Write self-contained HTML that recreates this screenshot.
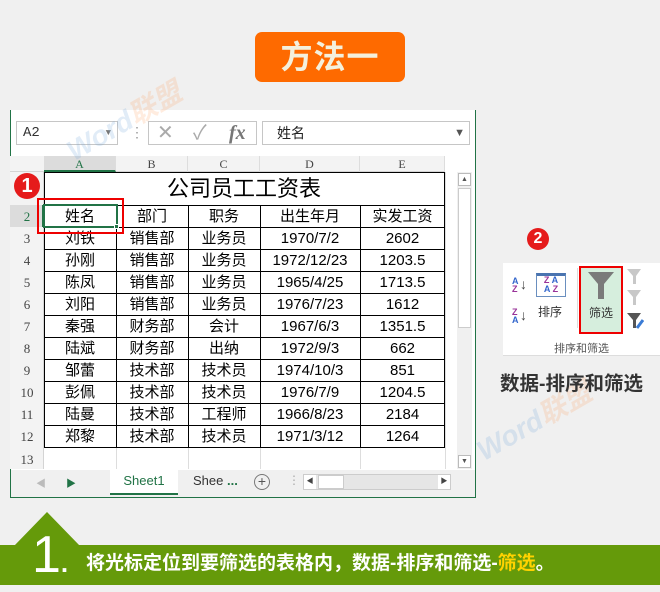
<!DOCTYPE html>
<html><head><meta charset="utf-8"><style>
*{margin:0;padding:0;box-sizing:border-box}
body{width:660px;height:585px;background:#f0f0f0;position:relative;overflow:hidden;font-family:"Liberation Sans","Noto Sans CJK SC",sans-serif}
.a{position:absolute}
.c{position:absolute;text-align:center;font-size:15px;color:#000;line-height:23px}
.hl{position:absolute;height:1px;background:#000}
.vl{position:absolute;width:1px;background:#000}
.rh{position:absolute;left:10px;width:34px;text-align:center;font-size:13px;color:#444;font-family:"Liberation Serif","DejaVu Serif",serif}
.ch{position:absolute;top:156px;height:16px;text-align:center;font-size:12px;color:#444;font-family:"Liberation Serif",serif;line-height:16px;border-right:1px solid #ddd}
</style></head><body>
<div class="a" style="left:255px;top:32px;width:150px;height:50px;background:#fe6a00;border-radius:7px;color:#f4f0dc;font-size:32px;font-weight:bold;text-align:center;line-height:50px;letter-spacing:1px">方法一</div>

<div class="a" style="left:10px;top:110px;width:466px;height:388px;background:#fff;border:1px solid #217346;border-top:none"></div>
<div class="a" style="left:16px;top:121px;width:102px;height:24px;border:1px solid #c6c6c6;font-size:14px;line-height:22px;padding-left:6px;color:#333;font-family:'Liberation Mono',monospace;background:#fff">A2<span style="position:absolute;right:6px;top:0;font-size:9px;color:#777">▼</span></div>
<div class="a" style="left:130px;top:124px;color:#999;font-size:14px">⋮</div>
<div class="a" style="left:148px;top:121px;width:109px;height:24px;border:1px solid #c6c6c6;font-size:20px;line-height:22px;color:#aaa"><span style="position:absolute;left:8px">✕</span><span style="position:absolute;left:44px">✓</span><span style="position:absolute;left:80px;font-style:italic;font-family:'Liberation Serif',serif;color:#777;font-weight:bold">fx</span></div>
<div class="a" style="left:262px;top:121px;width:208px;height:24px;border:1px solid #c6c6c6;font-size:14px;line-height:22px;padding-left:14px;color:#222">姓名<span style="position:absolute;right:4px;top:0;font-size:11px;color:#555">▼</span></div>

<div class="a" style="left:10px;top:156px;width:435px;height:16px;background:#f3f3f3;border-bottom:1px solid #d4d4d4"></div>
<div class="ch" style="left:44px;width:72px;background:#dcdcdc;border-bottom:2px solid #217346;color:#217346">A</div>
<div class="ch" style="left:116px;width:72px">B</div>
<div class="ch" style="left:188px;width:72px">C</div>
<div class="ch" style="left:260px;width:100px">D</div>
<div class="ch" style="left:360px;width:85px">E</div>
<div class="a" style="left:10px;top:172px;width:34px;height:297px;background:#f3f3f3;border-right:1px solid #d4d4d4"></div>
<div class="a" style="left:10px;top:205px;width:34px;height:22px;background:#dcdcdc;border-right:2px solid #217346"></div>
<div class="rh" style="top:180px">1</div>
<div class="rh" style="top:209px;color:#217346">2</div>
<div class="rh" style="top:231px">3</div><div class="rh" style="top:253px">4</div><div class="rh" style="top:275px">5</div><div class="rh" style="top:297px">6</div><div class="rh" style="top:319px">7</div><div class="rh" style="top:341px">8</div><div class="rh" style="top:363px">9</div><div class="rh" style="top:385px">10</div><div class="rh" style="top:407px">11</div><div class="rh" style="top:429px">12</div><div class="rh" style="top:452px">13</div>
<div class="a" style="left:116px;top:447px;width:1px;height:22px;background:#ddd"></div>
<div class="a" style="left:188px;top:447px;width:1px;height:22px;background:#ddd"></div>
<div class="a" style="left:260px;top:447px;width:1px;height:22px;background:#ddd"></div>
<div class="a" style="left:360px;top:447px;width:1px;height:22px;background:#ddd"></div>
<div class="a" style="left:445px;top:172px;width:1px;height:297px;background:#ddd"></div>
<div class="hl" style="left:44px;top:172px;width:401px"></div>
<div class="hl" style="left:44px;top:205px;width:401px"></div>
<div class="hl" style="left:44px;top:227px;width:401px"></div>
<div class="hl" style="left:44px;top:249px;width:401px"></div>
<div class="hl" style="left:44px;top:271px;width:401px"></div>
<div class="hl" style="left:44px;top:293px;width:401px"></div>
<div class="hl" style="left:44px;top:315px;width:401px"></div>
<div class="hl" style="left:44px;top:337px;width:401px"></div>
<div class="hl" style="left:44px;top:359px;width:401px"></div>
<div class="hl" style="left:44px;top:381px;width:401px"></div>
<div class="hl" style="left:44px;top:403px;width:401px"></div>
<div class="hl" style="left:44px;top:425px;width:401px"></div>
<div class="hl" style="left:44px;top:447px;width:401px"></div>
<div class="vl" style="left:44px;top:172px;height:275px"></div>
<div class="vl" style="left:116px;top:205px;height:242px"></div>
<div class="vl" style="left:188px;top:205px;height:242px"></div>
<div class="vl" style="left:260px;top:205px;height:242px"></div>
<div class="vl" style="left:360px;top:205px;height:242px"></div>
<div class="vl" style="left:444px;top:172px;height:275px"></div>
<div class="c" style="left:44px;top:174px;width:400px;font-size:22px;line-height:30px">公司员工工资表</div>
<div class="c" style="left:44px;top:205px;width:72px">姓名</div><div class="c" style="left:116px;top:205px;width:72px">部门</div><div class="c" style="left:188px;top:205px;width:72px">职务</div><div class="c" style="left:260px;top:205px;width:100px">出生年月</div><div class="c" style="left:360px;top:205px;width:85px">实发工资</div>
<div class="c" style="left:44px;top:227px;width:72px">刘铁</div><div class="c" style="left:116px;top:227px;width:72px">销售部</div><div class="c" style="left:188px;top:227px;width:72px">业务员</div><div class="c" style="left:260px;top:227px;width:100px">1970/7/2</div><div class="c" style="left:360px;top:227px;width:85px">2602</div>
<div class="c" style="left:44px;top:249px;width:72px">孙刚</div><div class="c" style="left:116px;top:249px;width:72px">销售部</div><div class="c" style="left:188px;top:249px;width:72px">业务员</div><div class="c" style="left:260px;top:249px;width:100px">1972/12/23</div><div class="c" style="left:360px;top:249px;width:85px">1203.5</div>
<div class="c" style="left:44px;top:271px;width:72px">陈凤</div><div class="c" style="left:116px;top:271px;width:72px">销售部</div><div class="c" style="left:188px;top:271px;width:72px">业务员</div><div class="c" style="left:260px;top:271px;width:100px">1965/4/25</div><div class="c" style="left:360px;top:271px;width:85px">1713.5</div>
<div class="c" style="left:44px;top:293px;width:72px">刘阳</div><div class="c" style="left:116px;top:293px;width:72px">销售部</div><div class="c" style="left:188px;top:293px;width:72px">业务员</div><div class="c" style="left:260px;top:293px;width:100px">1976/7/23</div><div class="c" style="left:360px;top:293px;width:85px">1612</div>
<div class="c" style="left:44px;top:315px;width:72px">秦强</div><div class="c" style="left:116px;top:315px;width:72px">财务部</div><div class="c" style="left:188px;top:315px;width:72px">会计</div><div class="c" style="left:260px;top:315px;width:100px">1967/6/3</div><div class="c" style="left:360px;top:315px;width:85px">1351.5</div>
<div class="c" style="left:44px;top:337px;width:72px">陆斌</div><div class="c" style="left:116px;top:337px;width:72px">财务部</div><div class="c" style="left:188px;top:337px;width:72px">出纳</div><div class="c" style="left:260px;top:337px;width:100px">1972/9/3</div><div class="c" style="left:360px;top:337px;width:85px">662</div>
<div class="c" style="left:44px;top:359px;width:72px">邹蕾</div><div class="c" style="left:116px;top:359px;width:72px">技术部</div><div class="c" style="left:188px;top:359px;width:72px">技术员</div><div class="c" style="left:260px;top:359px;width:100px">1974/10/3</div><div class="c" style="left:360px;top:359px;width:85px">851</div>
<div class="c" style="left:44px;top:381px;width:72px">彭佩</div><div class="c" style="left:116px;top:381px;width:72px">技术部</div><div class="c" style="left:188px;top:381px;width:72px">技术员</div><div class="c" style="left:260px;top:381px;width:100px">1976/7/9</div><div class="c" style="left:360px;top:381px;width:85px">1204.5</div>
<div class="c" style="left:44px;top:403px;width:72px">陆曼</div><div class="c" style="left:116px;top:403px;width:72px">技术部</div><div class="c" style="left:188px;top:403px;width:72px">工程师</div><div class="c" style="left:260px;top:403px;width:100px">1966/8/23</div><div class="c" style="left:360px;top:403px;width:85px">2184</div>
<div class="c" style="left:44px;top:425px;width:72px">郑黎</div><div class="c" style="left:116px;top:425px;width:72px">技术部</div><div class="c" style="left:188px;top:425px;width:72px">技术员</div><div class="c" style="left:260px;top:425px;width:100px">1971/3/12</div><div class="c" style="left:360px;top:425px;width:85px">1264</div>
<div class="a" style="left:43px;top:204px;width:75px;height:24px;border:2px solid #217346"></div>
<div class="a" style="left:114px;top:224px;width:5px;height:5px;background:#217346;border:1px solid #fff"></div>
<div class="a" style="left:37px;top:198px;width:87px;height:36px;border:2px solid #e00"></div>
<div class="a" style="left:14px;top:173px;width:26px;height:26px;border-radius:50%;background:#e51b1b;color:#fff;font-weight:bold;font-size:20px;text-align:center;line-height:26px">1</div>
<div class="a" style="left:457px;top:172px;width:15px;height:297px;background:#f0f0f0"></div>
<div class="a" style="left:458px;top:173px;width:13px;height:13px;border:1px solid #bbb;background:#fff;font-size:7px;text-align:center;color:#555;line-height:11px">▲</div>
<div class="a" style="left:458px;top:188px;width:13px;height:140px;border:1px solid #ccc;background:#fff"></div>
<div class="a" style="left:458px;top:455px;width:13px;height:13px;border:1px solid #bbb;background:#fff;font-size:7px;text-align:center;color:#555;line-height:11px">▼</div>
<div class="a" style="left:11px;top:470px;width:464px;height:27px;background:#f0f0f0"></div>
<div class="a" style="left:36px;top:475px;font-size:10px;color:#bbb">◀</div>
<div class="a" style="left:66px;top:475px;font-size:10px;color:#217346">▶</div>
<div class="a" style="left:110px;top:469px;width:68px;height:26px;background:#fff;border-bottom:2px solid #217346;color:#217346;font-size:13px;text-align:center;line-height:24px">Sheet1</div>
<div class="a" style="left:193px;top:473px;font-size:13px;color:#333">Shee <b style="color:#217346">...</b></div>
<div class="a" style="left:254px;top:474px;width:16px;height:16px;border:1px solid #777;border-radius:50%;text-align:center;line-height:13px;font-size:14px;color:#555">+</div>
<div class="a" style="left:288px;top:473px;color:#aaa;font-size:12px">⋮</div>
<div class="a" style="left:303px;top:474px;width:148px;height:16px;background:#e6e6e6;border:1px solid #ccc"></div>
<div class="a" style="left:304px;top:475px;width:12px;height:14px;background:#fff;font-size:7px;line-height:14px;text-align:center;color:#444">◀</div>
<div class="a" style="left:318px;top:475px;width:26px;height:14px;background:#fff;border:1px solid #ccc"></div>
<div class="a" style="left:438px;top:475px;width:12px;height:14px;background:#fff;font-size:7px;line-height:14px;text-align:center;color:#444">▶</div>
<div class="a" style="left:60px;top:100px;transform:rotate(-30deg);font-size:28px;font-weight:bold;color:rgba(120,170,220,.22);font-style:italic">Word<span style="color:rgba(255,150,80,.18)">联盟</span></div>
<div class="a" style="left:470px;top:400px;transform:rotate(-30deg);font-size:28px;font-weight:bold;color:rgba(120,170,220,.22);font-style:italic">Word<span style="color:rgba(255,150,80,.18)">联盟</span></div>

<div class="a" style="left:527px;top:228px;width:22px;height:22px;border-radius:50%;background:#e51b1b;color:#fff;font-weight:bold;font-size:16px;text-align:center;line-height:22px">2</div>
<div class="a" style="left:503px;top:263px;width:157px;height:93px;background:#fff;border-bottom:1px solid #ddd"></div>
<div class="a" style="left:512px;top:277px;font-size:9px;line-height:8px;color:#555;font-weight:bold"><span style="color:#36c">A</span><br><span style="color:#939">Z</span></div>
<div class="a" style="left:520px;top:276px;font-size:14px;color:#444">↓</div>
<div class="a" style="left:512px;top:308px;font-size:9px;line-height:8px;color:#555;font-weight:bold"><span style="color:#939">Z</span><br><span style="color:#36c">A</span></div>
<div class="a" style="left:520px;top:307px;font-size:14px;color:#444">↓</div>
<div class="a" style="left:536px;top:273px;width:30px;height:24px;border:1px solid #6a8fbf;border-top:3px solid #4a74b0;font-size:9px;line-height:9px;font-weight:bold;text-align:center"><span style="color:#939">Z</span> <span style="color:#36c">A</span><br><span style="color:#36c">A</span> <span style="color:#939">Z</span></div>
<div class="a" style="left:538px;top:303px;font-size:12px;color:#333">排序</div>
<div class="a" style="left:577px;top:268px;width:1px;height:60px;background:#ddd"></div>
<div class="a" style="left:579px;top:266px;width:44px;height:68px;background:#d6eedd;border:2px solid #e00"></div>
<svg class="a" style="left:587px;top:271px" width="28" height="30"><path d="M1 1H27L17 13V28H11V13Z" fill="#7a7a7a"/></svg>
<div class="a" style="left:589px;top:304px;font-size:12px;color:#333">筛选</div>
<svg class="a" style="left:626px;top:268px" width="18" height="66"><path d="M1 1H15L10 8V16H7V8Z" fill="#c8c8c8"/><path d="M1 22H15L10 29V37H7V29Z" fill="#c8c8c8"/><path d="M1 45H15L10 52V60H7V52Z" fill="#555"/><path d="M11 60L17 52" stroke="#3a7bd5" stroke-width="3"/></svg>
<div class="a" style="left:503px;top:340px;width:157px;text-align:center;font-size:11px;color:#555">排序和筛选</div>
<div class="a" style="left:500px;top:367px;font-size:19.5px;font-weight:bold;color:#333">数据-排序和筛选</div>

<svg class="a" style="left:0;top:510px" width="90" height="40"><path d="M14 36L47 2L80 36Z" fill="#659a0a"/></svg>
<div class="a" style="left:0;top:545px;width:660px;height:40px;background:#659a0a"></div>
<div class="a" style="left:32px;top:526px;font-size:52px;color:#fff;line-height:58px;font-family:'Liberation Sans',sans-serif">1<span style="font-size:26px;font-weight:bold">.</span></div>
<div class="a" style="left:86px;top:552px;font-size:19px;font-weight:bold;color:#fff;line-height:24px">将光标定位到要筛选的表格内，数据-排序和筛选-<span style="color:#ffd200">筛选</span>。</div>
</body></html>
